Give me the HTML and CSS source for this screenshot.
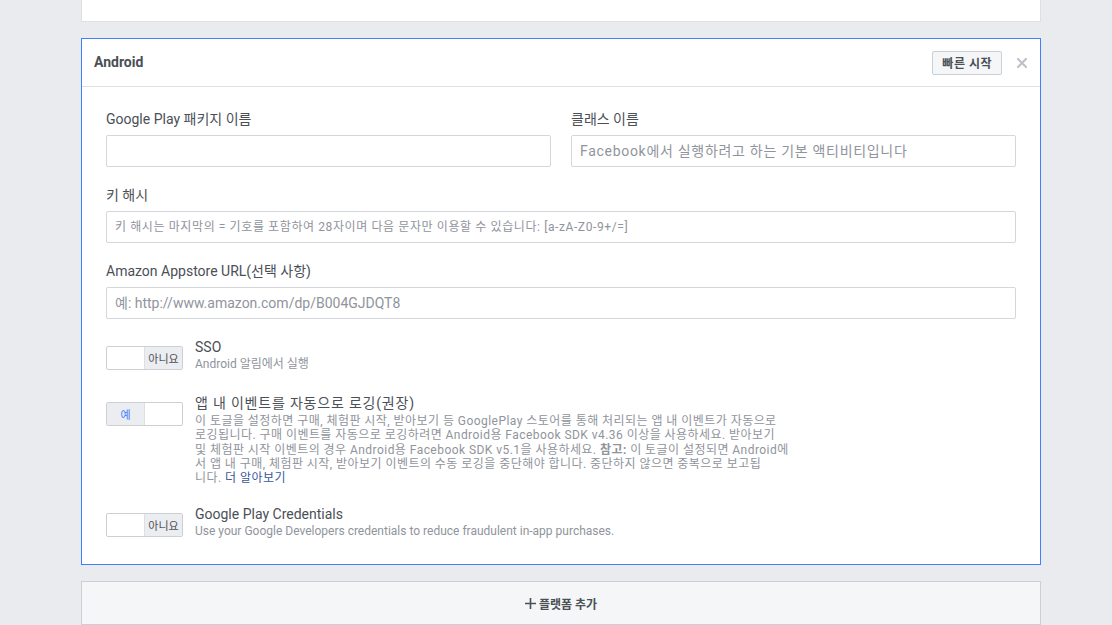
FILE: index.html
```html
<!DOCTYPE html>
<html lang="ko">
<head>
    <meta charset="UTF-8">
    <title>Android 플랫폼 설정</title>
    <link rel="stylesheet" href="styles.css">
</head>
<body>
    <div class="page">
        <div class="card top-card"></div>

        <div class="card platform">
            <div class="platform-head">
                <span class="platform-title">Android</span>
                <button class="quick-btn">빠른 시작</button>
                <span class="close">
                    <svg width="10" height="10" viewBox="0 0 10 10"><path d="M1 1 L9 9 M9 1 L1 9" stroke="#bec3c9" stroke-width="2.2" stroke-linecap="square"/></svg>
                </span>
            </div>

            <div class="platform-body">
                <div class="row two">
                    <div class="field">
                        <label>Google Play 패키지 이름</label>
                        <input type="text">
                    </div>
                    <div class="field">
                        <label>클래스 이름</label>
                        <input type="text" class="ko" placeholder="Facebook에서 실행하려고 하는 기본 액티비티입니다">
                    </div>
                </div>

                <div class="field">
                    <label>키 해시</label>
                    <input type="text" class="small" placeholder="키 해시는 마지막의 = 기호를 포함하여 28자이며 다음 문자만 이용할 수 있습니다: [a-zA-Z0-9+/=]">
                </div>

                <div class="field">
                    <label>Amazon Appstore URL(선택 사항)</label>
                    <input type="text" placeholder="예: http://www.amazon.com/dp/B004GJDQT8">
                </div>

                <div class="option first">
                    <div class="toggle">
                        <span class="seg"></span>
                        <span class="seg on">아니요</span>
                    </div>
                    <div class="option-text">
                        <div class="option-title">SSO</div>
                        <div class="option-desc">Android 알림에서 실행</div>
                    </div>
                </div>

                <div class="option events">
                    <div class="toggle">
                        <span class="seg on yes">예</span>
                        <span class="seg"></span>
                    </div>
                    <div class="option-text">
                        <div class="option-title ko">앱 내 이벤트를 자동으로 로깅(권장)</div>
                        <div class="option-desc long">이 토글을 설정하면 구매, 체험판 시작, 받아보기 등 GooglePlay 스토어를 통해 처리되는 앱 내 이벤트가 자동으로<br>로깅됩니다. 구매 이벤트를 자동으로 로깅하려면 Android용 Facebook SDK v4.36 이상을 사용하세요. 받아보기<br>및 체험판 시작 이벤트의 경우 Android용 Facebook SDK v5.1을 사용하세요. <b>참고:</b> 이 토글이 설정되면 Android에<br>서 앱 내 구매, 체험판 시작, 받아보기 이벤트의 수동 로깅을 중단해야 합니다. 중단하지 않으면 중복으로 보고됩<br>니다. <a href="#">더 알아보기</a></div>
                    </div>
                </div>

                <div class="option last">
                    <div class="toggle">
                        <span class="seg"></span>
                        <span class="seg on">아니요</span>
                    </div>
                    <div class="option-text">
                        <div class="option-title">Google Play Credentials</div>
                        <div class="option-desc">Use your Google Developers credentials to reduce fraudulent in-app purchases.</div>
                    </div>
                </div>
            </div>
        </div>

        <div class="card add-platform">
            <svg width="11" height="11" viewBox="0 0 11 11"><path d="M5.5 0 V11 M0 5.5 H11" stroke="#4b4f56" stroke-width="1.6"/></svg>
            <span>플랫폼 추가</span>
        </div>
    </div>
</body>
</html>
```

FILE: styles.css
```css
body {
    margin: 0;
    background: #e9ebee;
    font-family: Roboto, "Noto Sans CJK KR", sans-serif;
    color: #4b4f56;
    overflow: hidden;
}

.page {
    width: 960px;
    margin-left: 81px;
}

.card {
    background: #fff;
    border: 1px solid #dddfe2;
    box-sizing: border-box;
}

.top-card {
    height: 22px;
    border-top: none;
    margin-bottom: 16px;
}

.platform {
    border-color: #4080ff;
}

.platform-head {
    display: flex;
    align-items: center;
    height: 47px;
    padding: 0 13px 0 12px;
    border-bottom: 1px solid #dddfe2;
}

.platform-title {
    flex: 1;
    font-size: 14px;
    font-weight: bold;
    margin-top: -2px;
}

.quick-btn {
    height: 24px;
    padding: 0 9px;
    background: #f5f6f7;
    border: 1px solid #ccd0d5;
    border-radius: 2px;
    font-family: Roboto, "Noto Sans CJK KR", sans-serif;
    font-size: 12px;
    font-weight: bold;
    letter-spacing: 0.5px;
    color: #4b4f56;
}

.close {
    display: flex;
    margin-left: 15px;
}

.platform-body {
    padding: 24px 24px 25px 24px;
}

.row.two {
    display: grid;
    grid-template-columns: 1fr 1fr;
    gap: 20px;
}

.field {
    margin-bottom: 20px;
}

.field label {
    display: block;
    font-size: 14px;
    line-height: 17px;
    margin-bottom: 7px;
}

.field input {
    display: block;
    width: 100%;
    height: 32px;
    box-sizing: border-box;
    border: 1px solid #d3d6db;
    border-radius: 2px;
    padding: 0 8px;
    font-family: Roboto, "Noto Sans CJK KR", sans-serif;
    font-size: 14px;
    color: #1d2129;
    outline: none;
}

.field input.ko {
    letter-spacing: 0.7px;
}

.field input.small {
    font-size: 12px;
    letter-spacing: 0.6px;
}

.field input::placeholder {
    color: #90949c;
}

.option {
    display: flex;
    gap: 12px;
}

.option.first {
    margin-top: 20px;
}

.option.events {
    margin-top: 23px;
}

.option.last {
    margin-top: 21px;
}

.toggle {
    display: flex;
    width: 77px;
    height: 24px;
    margin-top: 7px;
    border: 1px solid #ccd0d5;
    border-radius: 2px;
    box-sizing: border-box;
    flex-shrink: 0;
}

.seg {
    flex: 1;
    display: flex;
    align-items: center;
    justify-content: center;
    font-size: 11px;
}

.seg.on {
    background: #ebedf0;
}

.seg.on:first-child {
    border-right: 1px solid #dddfe2;
}

.seg.on:last-child {
    border-left: 1px solid #dddfe2;
}

.seg.yes {
    color: #4080ff;
}

.option-title {
    font-size: 14px;
    line-height: 16px;
}

.option-title.ko {
    letter-spacing: 0.8px;
}

.option-desc {
    font-size: 12px;
    line-height: 15px;
    color: #90949c;
    margin-top: 2px;
}

.option-desc.long {
    margin-top: 3px;
    line-height: 14.3px;
    letter-spacing: 0.45px;
    white-space: nowrap;
}

.option-desc b {
    color: #90949c;
}

.option-desc a {
    color: #385898;
    text-decoration: none;
}

.add-platform {
    margin-top: 16px;
    height: 44px;
    background: #f5f6f7;
    border-color: #ccd0d5;
    display: flex;
    align-items: center;
    justify-content: center;
    gap: 3px;
    font-size: 12px;
    font-weight: bold;
    color: #4b4f56;
}
```
